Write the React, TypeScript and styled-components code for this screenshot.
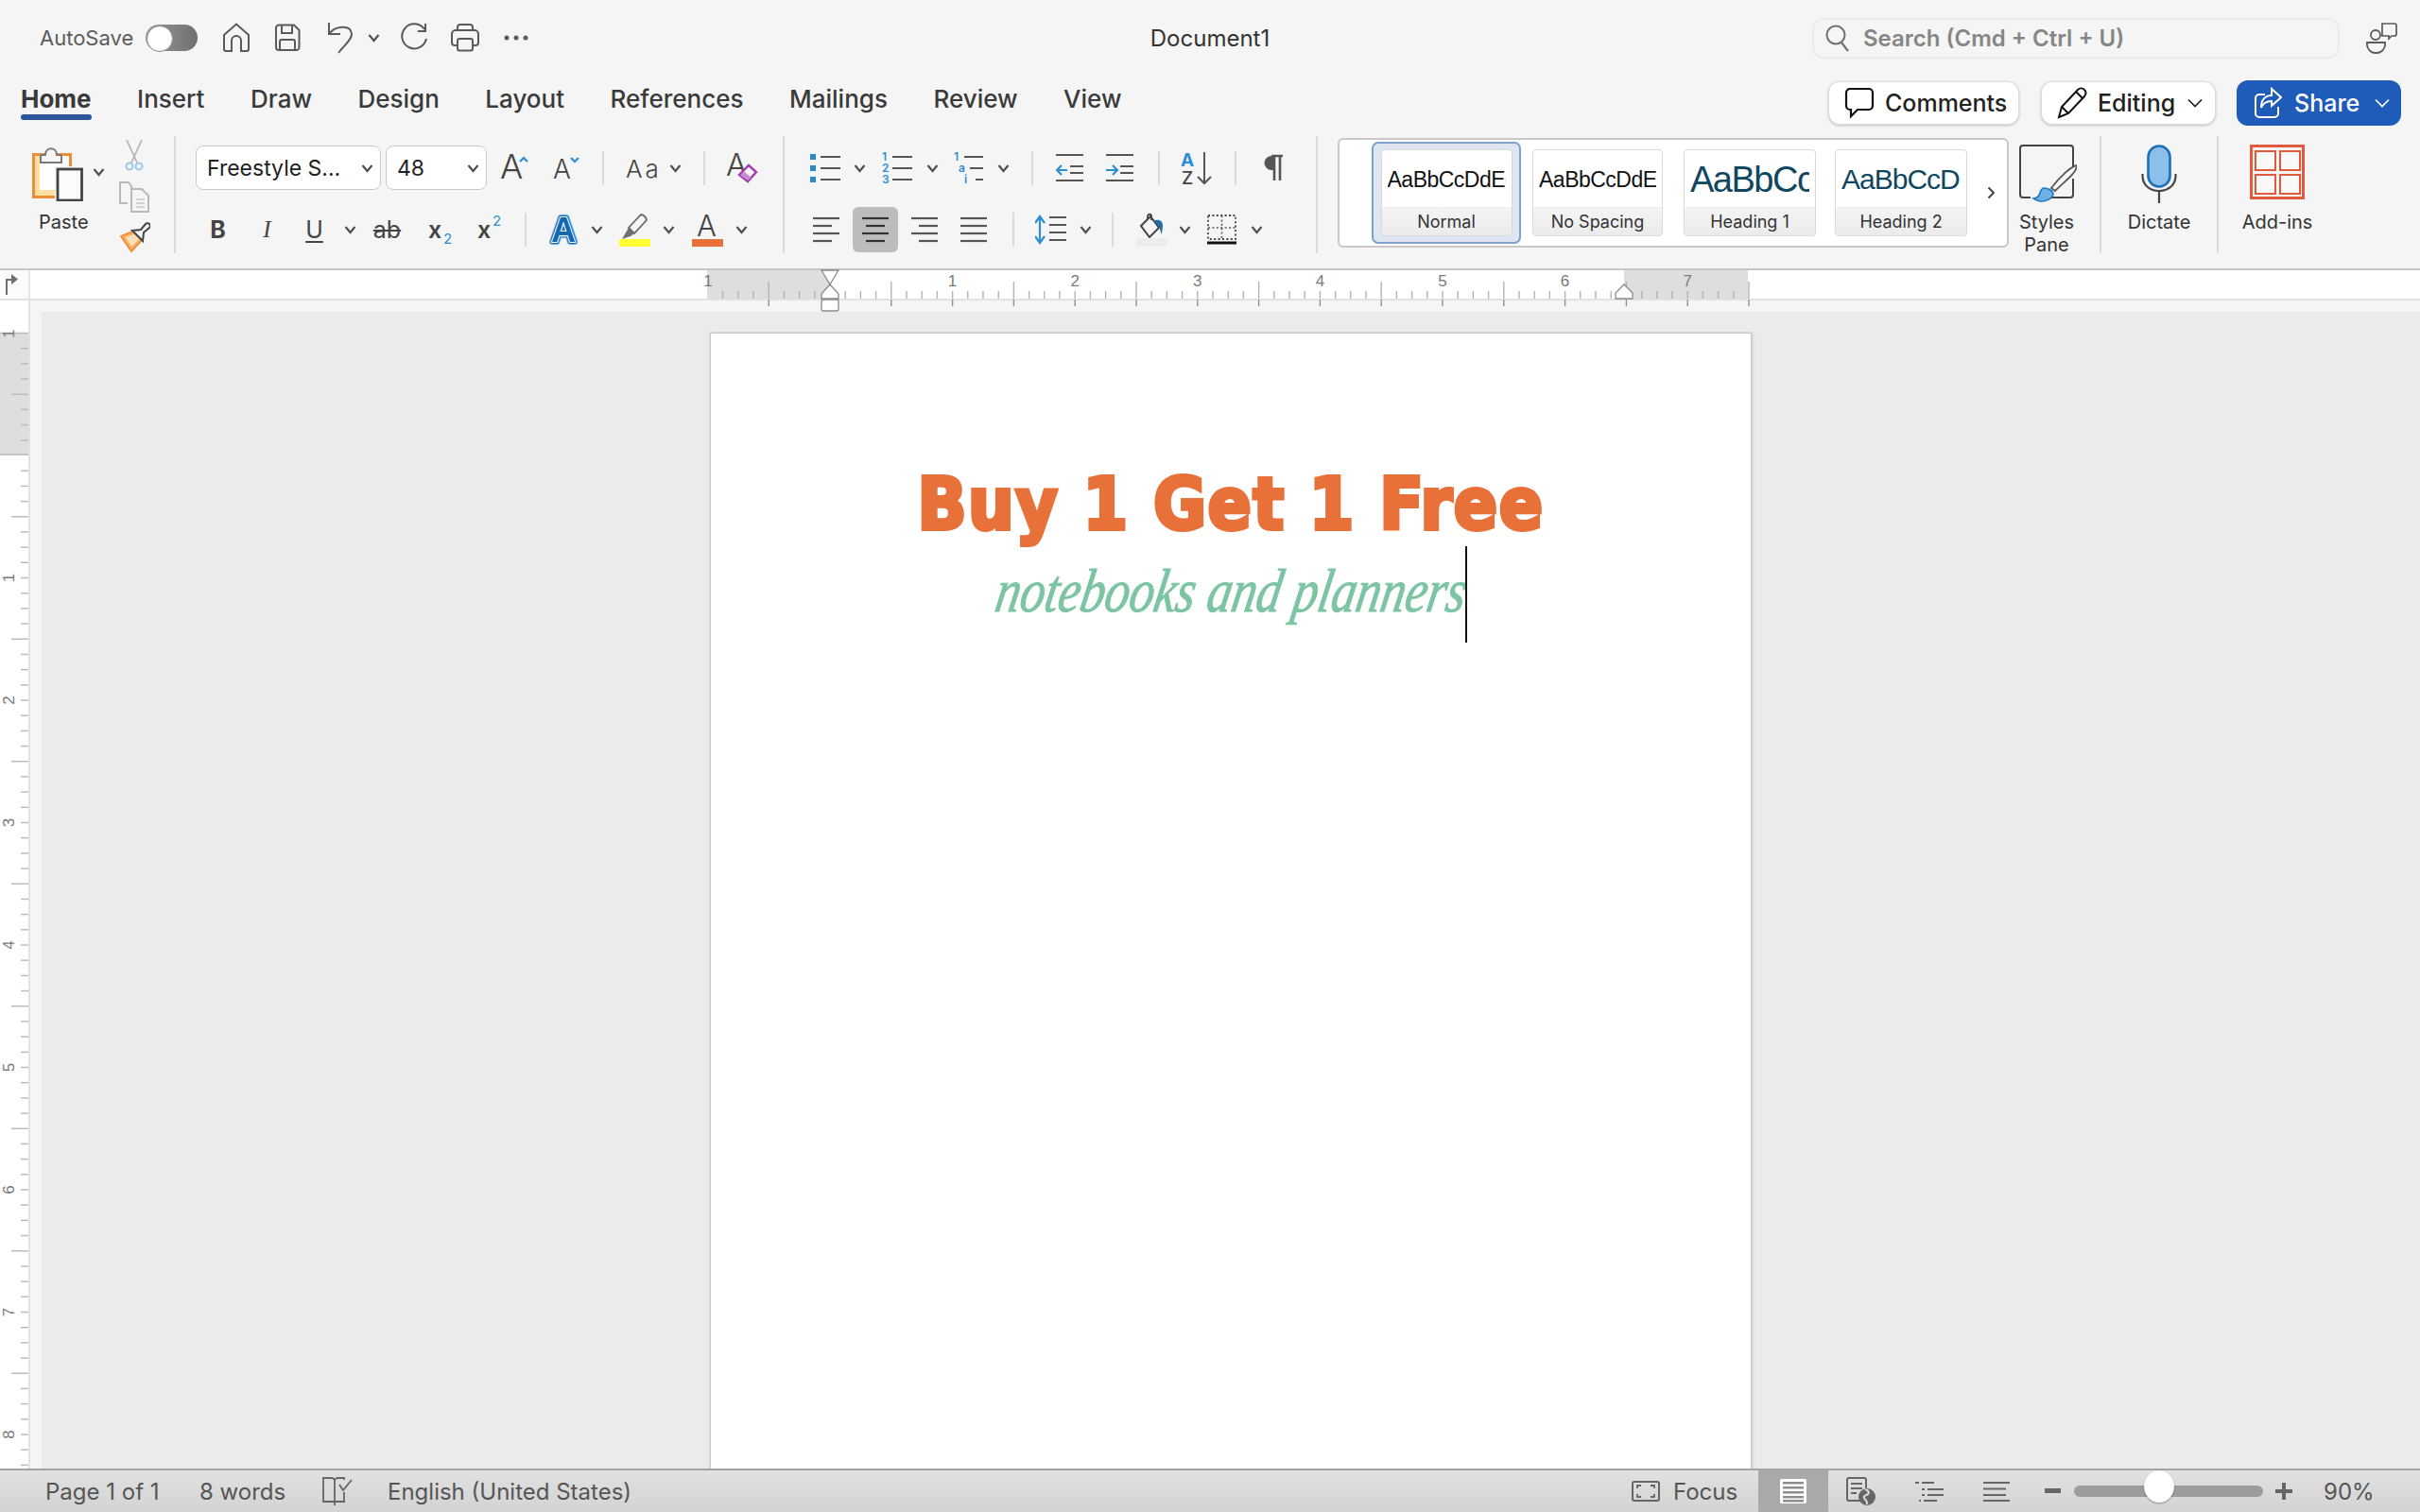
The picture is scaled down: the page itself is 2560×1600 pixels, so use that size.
import React, { FC, ReactNode } from 'react';
import styled, { createGlobalStyle } from 'styled-components';

const GlobalStyle = createGlobalStyle`
  html, body { margin: 0; padding: 0; background: #f5f5f5; }
  body { font-family: Inter, "Liberation Sans", sans-serif; overflow: hidden; }
  * { box-sizing: border-box; }
`;

const Window = styled.div`
  width: 2560px;
  height: 1600px;
  display: flex;
  flex-direction: column;
  overflow: hidden;
  background: #f5f5f5;
  color: #333;
`;

/* title bar */
const TopBar = styled.div`
  height: 80px;
  flex: none;
  display: grid;
  grid-template-columns: 1fr auto 1fr;
  align-items: center;
`;

const QuickAccess = styled.div`
  display: flex;
  align-items: center;
  padding-left: 42px;
`;

const AutoSave = styled.span`
  font-size: 22px;
  color: #5c5c5c;
  width: 112px;
`;

const Toggle = styled.span`
  position: relative;
  width: 55px;
  height: 28px;
  border-radius: 14px;
  background: linear-gradient(90deg, #9a9a9a, #6f6f6f);
  &::after {
    content: '';
    position: absolute;
    left: 1px;
    top: 1px;
    width: 26px;
    height: 26px;
    border-radius: 50%;
    background: #fff;
    border: 1px solid #8c8c8c;
  }
`;

const DocTitle = styled.div`
  font-size: 24px;
  color: #333;
`;

const TopRight = styled.div`
  display: flex;
  align-items: center;
  justify-content: flex-end;
  padding-right: 24px;
`;

const SearchBox = styled.div`
  width: 558px;
  height: 43px;
  display: flex;
  align-items: center;
  padding-left: 12px;
  gap: 14px;
  border: 2px solid #eaeaea;
  border-radius: 12px;
  color: #868686;
  font-size: 24px;
  font-weight: 600;
`;

/* tab row */
const TabRow = styled.div`
  height: 60px;
  flex: none;
  display: flex;
  align-items: flex-start;
  padding: 4px 20px 0 22px;
`;

const Tabs = styled.div`
  display: flex;
  gap: 48.5px;
`;

const Tab = styled.div<{ $active?: boolean }>`
  position: relative;
  height: 42px;
  line-height: 42px;
  font-size: 26px;
  color: #3a3a3a;
  font-weight: ${p => (p.$active ? 700 : 500)};
  &::after {
    content: '';
    display: ${p => (p.$active ? 'block' : 'none')};
    position: absolute;
    left: 0;
    right: 0;
    bottom: -1px;
    height: 6px;
    border-radius: 3px;
    background: #2b579a;
  }
`;

const ActionGroup = styled.div`
  margin-left: auto;
  display: flex;
  align-items: center;
  margin-top: 1px;
`;

const PillButton = styled.button<{ $w: number; $ml?: number; $primary?: boolean }>`
  width: ${p => p.$w}px;
  margin-left: ${p => p.$ml ?? 0}px;
  height: ${p => (p.$primary ? 48 : 46)}px;
  display: flex;
  align-items: center;
  padding: 0 0 0 ${p => (p.$primary ? 18 : 16)}px;
  gap: ${p => (p.$primary ? 13 : 11)}px;
  border-radius: 12px;
  border: ${p => (p.$primary ? 'none' : '1px solid #dcdcdc')};
  background: ${p => (p.$primary ? '#1f5cba' : '#fff')};
  color: ${p => (p.$primary ? '#fff' : '#222')};
  box-shadow: ${p => (p.$primary ? 'none' : '0 1px 3px rgba(0,0,0,.22)')};
  font: 500 25px Inter, "Liberation Sans", sans-serif;
`;

/* ribbon */
const Ribbon = styled.div`
  height: 146px;
  flex: none;
  display: flex;
  align-items: flex-start;
  padding-top: 4px;
  border-bottom: 2px solid #c6c6c6;
`;

const Group = styled.div<{ $w: number; $line?: boolean }>`
  width: ${p => p.$w}px;
  height: 124px;
  flex: none;
  border-right: ${p => (p.$line ? '2px solid #dadada' : 'none')};
`;

const ClipGroup = styled(Group)`
  display: flex;
  padding: 9px 0 0 34px;
`;

const PasteCol = styled.div`
  width: 54px;
  flex: none;
  display: flex;
  flex-direction: column;
`;

const BigLabel = styled.div`
  font-size: 20px;
  line-height: 24px;
  color: #333;
  text-align: center;
  white-space: nowrap;
`;

const PasteLabel = styled(BigLabel)`
  margin: 10px 0 0 7px;
`;

const ChevCell = styled.span`
  width: 14px;
  height: 58px;
  margin-left: 9px;
  flex: none;
  display: flex;
  align-items: center;
  justify-content: center;
`;

const SmallTools = styled.div`
  display: flex;
  flex-direction: column;
  margin: -6px 0 0 14px;
  gap: 10px;
`;

const Rows = styled(Group)`
  display: flex;
  flex-direction: column;
  gap: 18px;
  padding-top: 10px;
`;

const Row = styled.div<{ $pl?: number }>`
  height: 47px;
  display: flex;
  align-items: center;
  padding-left: ${p => p.$pl ?? 0}px;
`;

const Slot = styled.span<{ $w: number; $ml?: number }>`
  flex: none;
  width: ${p => p.$w}px;
  margin-left: ${p => p.$ml ?? 0}px;
  display: flex;
  align-items: center;
  justify-content: center;
`;

const ActiveSlot = styled(Slot)`
  height: 48px;
  background: #bcbcbc;
  border-radius: 6px;
`;

const Divider = styled.span<{ $ml: number }>`
  flex: none;
  width: 2px;
  height: 36px;
  margin-left: ${p => p.$ml}px;
  background: #dadada;
`;

const SelectBox = styled.div<{ $w: number; $ml?: number }>`
  width: ${p => p.$w}px;
  margin-left: ${p => p.$ml ?? 0}px;
  height: 47px;
  flex: none;
  display: flex;
  align-items: center;
  justify-content: space-between;
  padding: 0 7px 0 11px;
  background: #fff;
  border: 1.5px solid #c9c9c9;
  border-radius: 8px;
  font-size: 23px;
  color: #222;
`;

const GalleryGroup = styled(Group)`
  display: flex;
  align-items: flex-start;
  padding: 2px 0 0 21px;
`;

const Gallery = styled.div`
  width: 710px;
  height: 116px;
  flex: none;
  display: flex;
  align-items: center;
  padding-left: 34px;
  background: #fff;
  border: 2px solid #c8c8c8;
  border-radius: 6px;
`;

const SelectedStyle = styled.div`
  width: 158px;
  height: 108px;
  flex: none;
  display: flex;
  align-items: center;
  justify-content: center;
  background: #dfe6f1;
  border: 2.5px solid #7da0cf;
  border-radius: 7px;
`;

const StyleCard = styled.div<{ $w: number; $ml?: number }>`
  width: ${p => p.$w}px;
  margin-left: ${p => p.$ml ?? 0}px;
  height: 92px;
  flex: none;
  display: flex;
  flex-direction: column;
  border: 1.5px solid #d9d9d9;
  border-radius: 4px;
  overflow: hidden;
  background: linear-gradient(#fff 70%, #f7f7f7);
`;

const StylePreview = styled.div<{ $size: number; $track?: number; $heading?: boolean }>`
  height: 60px;
  line-height: 62px;
  margin: 0 6px;
  overflow: hidden;
  white-space: nowrap;
  font-family: "Liberation Sans", sans-serif;
  font-size: ${p => p.$size}px;
  letter-spacing: ${p => p.$track ?? 0}px;
  color: ${p => (p.$heading ? '#0f4761' : '#111')};
`;

const StyleName = styled.div`
  flex: 1;
  display: flex;
  align-items: center;
  justify-content: center;
  font-size: 18px;
  color: #333;
  background: linear-gradient(#f4f4f4, #ebebeb);
  border-top: 1px solid #eeeeee;
`;

const BigTool = styled.div<{ $ml?: number; $w: number }>`
  width: ${p => p.$w}px;
  margin-left: ${p => p.$ml ?? 0}px;
  flex: none;
  display: flex;
  flex-direction: column;
  align-items: center;
`;

const PaneTool = styled(BigTool)`
  margin-top: -2px;
`;

const BigIconBox = styled.div`
  height: 79px;
  padding-top: 9px;
  display: flex;
  align-items: flex-start;
`;

const ToolGroup = styled(Group)`
  display: flex;
  justify-content: center;
`;

/* rulers and canvas */
const RulerRow = styled.div`
  height: 32px;
  flex: none;
  display: flex;
  background: #fff;
  border-bottom: 2px solid #e2e2e2;
`;

const RulerCorner = styled.div`
  width: 32px;
  height: 30px;
  flex: none;
  display: flex;
  align-items: center;
  justify-content: center;
  padding-right: 6px;
  background: #fbfbfb;
  border-right: 2px solid #e6e6e6;
`;

const RulerSvg = styled.svg`
  display: block;
  flex: none;
  overflow: visible;
  position: relative;
  z-index: 2;
`;

const Work = styled.div`
  flex: 1;
  min-height: 0;
  display: flex;
`;

const VRulerCol = styled.div`
  width: 32px;
  flex: none;
  background: #fff;
  border-right: 2px solid #e2e2e2;
  overflow: hidden;
`;

const Canvas = styled.div`
  flex: 1;
  min-width: 0;
  padding: 12px 0 0 12px;
  background: #f5f5f5;
  overflow: hidden;
`;

const CanvasInner = styled.div`
  height: 100%;
  padding: 23px 0 0 708px;
  background: #ebebeb;
  overflow: hidden;
`;

const Page = styled.div`
  width: 1100px;
  height: 1300px;
  padding-top: 136px;
  background: #fff;
  box-shadow: 0 0 0 1.5px #c9c9c9, 3px 0 3px rgba(0, 0, 0, 0.06);
  text-align: center;
`;

const Headline = styled.div`
  height: 90px;
  font-family: "DejaVu Sans", "Liberation Sans", sans-serif;
  font-stretch: condensed;
  font-weight: 700;
  font-size: 76px;
  line-height: 90px;
  letter-spacing: 1.5px;
  color: #e8713a;
  -webkit-text-stroke: 4px #e8713a;
  white-space: nowrap;
`;

const Subline = styled.div`
  height: 90px;
  padding-top: 4px;
  font-family: "Liberation Serif", serif;
  font-style: italic;
  font-size: 52px;
  line-height: 90px;
  color: #7cc4a4;
  -webkit-text-stroke: 0.8px #7cc4a4;
  white-space: nowrap;
`;

const SubText = styled.span`
  position: relative;
  display: inline-block;
  margin-right: 3px;
`;

const SlantedText = styled.span`
  display: inline-block;
  transform: skewX(-10deg) scaleY(1.25);
  transform-origin: 50% 62%;
`;

const Caret = styled.span`
  position: absolute;
  right: -3px;
  top: -5px;
  width: 2px;
  height: 102px;
  background: #111;
`;

/* status bar */
const StatusBar = styled.div`
  height: 46px;
  flex: none;
  display: flex;
  align-items: center;
  padding-left: 48px;
  background: linear-gradient(#e1e1e1, #d3d3d3);
  border-top: 2px solid #a3a3a3;
  color: #555;
  font-size: 24px;
`;

const StatusText = styled.span<{ $w: number; $ml?: number }>`
  width: ${p => p.$w}px;
  margin-left: ${p => p.$ml ?? 0}px;
  flex: none;
  white-space: nowrap;
`;

const StatusRight = styled.div`
  margin-left: auto;
  height: 100%;
  display: flex;
  align-items: center;
`;

const ViewActive = styled.span`
  width: 74px;
  height: 100%;
  margin-left: 22px;
  display: flex;
  align-items: center;
  justify-content: center;
  background: #a9a9a9;
`;

const ZoomTrack = styled.span`
  position: relative;
  width: 200px;
  height: 12px;
  margin-left: 14px;
  flex: none;
  border-radius: 6px;
  background: #9c9c9c;
`;

const ZoomThumb = styled.span<{ $pos: number }>`
  position: absolute;
  left: ${p => p.$pos}px;
  top: -16px;
  width: 32px;
  height: 34px;
  margin-left: -16px;
  border-radius: 50%;
  background: #fff;
  box-shadow: 0 1px 2px rgba(0, 0, 0, 0.35);
`;

/* icons */
type SvgProps = { w: number; h: number; children: ReactNode };

const Ico: FC<SvgProps> = ({ w, h, children }) => (
  <svg width={w} height={h} viewBox={`0 0 ${w} ${h}`} fill="none" style={{ display: 'block', flex: 'none' }}>
    {children}
  </svg>
);

const LINE = '#5a5a5a';
const BLUE = '#2c8fd0';
const UI = 'Inter, "Liberation Sans", sans-serif';

const Chev: FC<{ color?: string }> = ({ color = '#505050' }) => (
  <Ico w={13} h={10}>
    <path d="M1.5 2 6.5 8 11.5 2" stroke={color} strokeWidth="2.2" />
  </Ico>
);
const ThinChev: FC<{ color: string }> = ({ color }) => (
  <Ico w={16} h={10}>
    <path d="M1 1.500 8 8.500 15 1.500" stroke={color} strokeWidth="1.700" />
  </Ico>
);

const HomeIcon = () => (
  <Ico w={30} h={32}>
    <path d="M2 13 15 1.5 28 13V28a2 2 0 0 1-2 2h-6V19a5 5 0 0 0-10 0v11H4a2 2 0 0 1-2-2Z" stroke={LINE} strokeWidth="2" />
  </Ico>
);
const SaveIcon = () => (
  <Ico w={28} h={30}>
    <path d="M5 1.5h16l5.500 5.500V25a3 3 0 0 1-3 3H5a3 3 0 0 1-3-3V4.500a3 3 0 0 1 3-3Z" stroke={LINE} strokeWidth="2" />
    <path d="M8 2v8h11V2M6 28V19a2 2 0 0 1 2-2h12a2 2 0 0 1 2 2v9" stroke={LINE} strokeWidth="2" />
  </Ico>
);
const UndoIcon = () => (
  <Ico w={28} h={34}>
    <path d="M2 1v12h12M2.500 12.500C8 5 25 2 26 13c.5 6-9 13-14 20" stroke={LINE} strokeWidth="2" />
  </Ico>
);
const RedoIcon = () => (
  <Ico w={30} h={32}>
    <path d="M26 7A13 13 0 1 0 28 17M27 1v8h-8" stroke={LINE} strokeWidth="2" />
  </Ico>
);
const PrintIcon = () => (
  <Ico w={32} h={30}>
    <path d="M8 7V4a3 3 0 0 1 3-3h10a3 3 0 0 1 3 3v3M8 23H5a3 3 0 0 1-3-3V11a4 4 0 0 1 4-4h20a4 4 0 0 1 4 4v9a3 3 0 0 1-3 3h-3" stroke={LINE} strokeWidth="2" />
    <rect x="8" y="16" width="16" height="12.500" rx="2" stroke={LINE} strokeWidth="2" />
  </Ico>
);
const DotsIcon = () => (
  <Ico w={26} h={6}>
    <circle cx="3" cy="3" r="2.500" fill={LINE} />
    <circle cx="13" cy="3" r="2.500" fill={LINE} />
    <circle cx="23" cy="3" r="2.500" fill={LINE} />
  </Ico>
);
const SearchIcon = () => (
  <Ico w={26} h={30}>
    <circle cx="11" cy="12" r="9.500" stroke="#707070" strokeWidth="2" />
    <path d="M17 20l7 9" stroke="#707070" strokeWidth="2.200" />
  </Ico>
);
const PeopleChat = () => (
  <Ico w={34} h={34}>
    <path d="M18 2h13a2 2 0 0 1 2 2v9a2 2 0 0 1-2 2h-3l-3 3v-3h-7z" fill="#f5f5f5" stroke={LINE} strokeWidth="1.700" />
    <circle cx="11" cy="14" r="5" stroke={LINE} strokeWidth="1.800" />
    <path d="M2 22h19v3a9 9 0 0 1-9 8h-1a9 9 0 0 1-9-8z" stroke={LINE} strokeWidth="1.800" />
  </Ico>
);
const CommentIcon = () => (
  <Ico w={32} h={34}>
    <path d="M6 2h20a4 4 0 0 1 4 4v14a4 4 0 0 1-4 4H14l-7 7v-7H6a4 4 0 0 1-4-4V6a4 4 0 0 1 4-4Z" stroke="#111" strokeWidth="2.200" />
  </Ico>
);
const PencilIcon = () => (
  <Ico w={32} h={34}>
    <path d="M2 32 5 21 22 3c2-2 5-2 7 0s1.500 5 0 7L12 28Z M5 21l7 7M20 5l7 7" stroke="#111" strokeWidth="2" />
  </Ico>
);
const ShareIcon = () => (
  <Ico w={30} h={34}>
    <path d="M12 8H6a4 4 0 0 0-4 4v16a4 4 0 0 0 4 4h16a4 4 0 0 0 4-4v-7" stroke="#fff" strokeWidth="2" />
    <path d="M19 2l10 9-10 9v-5c-6 0-9 2-11 7 0-8 4-13 11-13z" stroke="#fff" strokeWidth="2" />
  </Ico>
);
const ClipboardIcon = () => (
  <Ico w={54} h={60}>
    <rect x="1.500" y="10.500" width="39" height="45" fill="#fbe0a0" stroke="#ea8e3c" strokeWidth="3" />
    <rect x="8" y="12" width="31" height="36" fill="#fdfdfd" />
    <path d="M9 19V13c0-1 1-2 2-2h3c0-9 12-9 12 0h3c1 0 2 1 2 2v6z" fill="#f5f5f5" stroke="#7a7a7a" strokeWidth="2" />
    <rect x="24" y="23" width="30" height="37" fill="#f5f5f5" />
    <rect x="27" y="26" width="25.500" height="33" fill="#fbfbfb" stroke="#444" strokeWidth="2.800" />
  </Ico>
);
const ScissorsIcon = () => (
  <Ico w={22} h={34}>
    <path d="M3 1 14 25M19 1 8 25" stroke="#b5b5b5" strokeWidth="1.800" />
    <circle cx="6" cy="29" r="3.500" stroke="#9cc7e6" strokeWidth="2" />
    <circle cx="16" cy="29" r="3.500" stroke="#9cc7e6" strokeWidth="2" />
  </Ico>
);
const CopyIcon = () => (
  <Ico w={34} h={34}>
    <path d="M10 24H2V2h9l3 4v3" stroke="#b9b9b9" strokeWidth="2" />
    <path d="M14 9h11l7 7v17H14z" stroke="#b9b9b9" strokeWidth="2" />
    <path d="M19 20h9M19 24h9M19 28h9" stroke="#c6c6c6" strokeWidth="1.600" />
  </Ico>
);
const BrushIcon = () => (
  <Ico w={34} h={32}>
    <path d="M3 15 17 9l9 9-12 13z" fill="#f7b26a" stroke="#ee8a2d" strokeWidth="1.800" />
    <path d="M8 16l9-3 5 5-8 8z" fill="#fbe0b8" />
    <path d="M15 9l9-1 5-6c1-1 3-1 4 0s1 3 0 4l-6 5-1 9z" fill="#f5f5f5" stroke="#444" strokeWidth="2" />
  </Ico>
);
const GrowA: FC<{ up?: boolean }> = ({ up }) => (
  <Ico w={up ? 32 : 28} h={32}>
    <text x="0" y="27" fontFamily={UI} fontWeight="300" fontSize={up ? 36 : 28} fill="#444">A</text>
    {up ? <path d="M21 9l4-4 4 4" stroke={BLUE} strokeWidth="2.200" /> : <path d="M19 5l4 4 4-4" stroke={BLUE} strokeWidth="2.200" />}
  </Ico>
);
const CaseIcon = () => (
  <Ico w={34} h={30}>
    <text x="0" y="25" fontFamily={UI} fontWeight="300" fontSize="26" fill="#444" letterSpacing="3">Aa</text>
  </Ico>
);
const ClearIcon = () => (
  <Ico w={34} h={36}>
    <text x="0" y="26" fontFamily={UI} fontWeight="300" fontSize="33" fill="#444">A</text>
    <path d="M14 25 24 15l8 7-9 10z" fill="#f5f5f5" stroke="#a03ab0" strokeWidth="2.400" />
    <path d="M15 25.500 19 21.500 27 28 23 31z" fill="#c88bd6" />
  </Ico>
);
const TextGlyph = styled.span<{ $bold?: boolean; $italic?: boolean; $serif?: boolean; $underline?: boolean; $strike?: boolean }>`
  font-family: ${p => (p.$serif ? '"Liberation Serif", serif' : 'Inter, "Liberation Sans", sans-serif')};
  font-weight: ${p => (p.$bold ? 700 : 400)};
  font-style: ${p => (p.$italic ? 'italic' : 'normal')};
  text-decoration: ${p => (p.$underline ? 'underline' : p.$strike ? 'line-through' : 'none')};
  text-underline-offset: 3px;
  font-size: 25px;
  line-height: 30px;
  color: #444;
`;
const ScriptIcon: FC<{ up?: boolean }> = ({ up }) => (
  <Ico w={26} h={32}>
    <text x="0" y="25" fontFamily={UI} fontWeight="600" fontSize="25" fill="#444">x</text>
    <text x="16" y={up ? 12 : 31} fontFamily={UI} fontSize="15" fill={BLUE}>2</text>
  </Ico>
);
const EffectA = () => {
  const layers = [
    { stroke: '#9ccff2', sw: 6.500 },
    { stroke: '#1268b0', sw: 4.500 },
    { stroke: '#ffffff', sw: 2.200 },
    { stroke: '#1268b0', sw: 0 },
  ];
  return (
    <Ico w={32} h={34}>
      {layers.map(l => (
        <text
          key={l.stroke + l.sw}
          x="16"
          y="30"
          textAnchor="middle"
          fontFamily='"Liberation Sans", sans-serif'
          fontWeight="700"
          fontSize="36"
          fill="#1268b0"
          stroke={l.stroke}
          strokeWidth={l.sw}
          strokeLinejoin="round"
        >
          A
        </text>
      ))}
    </Ico>
  );
};
const HighlightIcon = () => (
  <Ico w={33} h={36}>
    <path d="M10 16 22 3c1-1 3-1 5 1s2 4 1 5L16 22z" fill="#f5f5f5" stroke="#666" strokeWidth="1.800" />
    <path d="M10 16l6 6-4 3-9 3z" fill="#707070" />
    <rect y="28" width="33" height="8" fill="#ffff30" />
  </Ico>
);
const ColorA = () => (
  <Ico w={33} h={36}>
    <text x="5" y="25" fontFamily={UI} fontWeight="300" fontSize="31" fill="#444">A</text>
    <rect y="28" width="33" height="8" fill="#e8713a" />
  </Ico>
);
const ListIcon: FC<{ kind: 'bullet' | 'number' | 'multi' }> = ({ kind }) => (
  <Ico w={32} h={36}>
    {kind === 'bullet' && [3, 15, 27].map(y => <rect key={y} x="0" y={y} width="6" height="6" fill="#2b88c8" />)}
    {kind === 'number' &&
      ['1', '2', '3'].map((n, i) => (
        <text key={n} x="0" y={10 + i * 12} fontFamily={UI} fontWeight="600" fontSize="12" fill={BLUE}>{n}</text>
      ))}
    {kind === 'multi' &&
      ['1', 'a', 'i'].map((n, i) => (
        <text key={n} x={i === 0 ? 0 : i === 1 ? 5 : 11} y={10 + i * 12} fontFamily={UI} fontWeight="600" fontSize="12" fill={BLUE}>{n}</text>
      ))}
    <path d={kind === 'multi' ? 'M11 6h20M17 18h14M23 30h8' : 'M11 6h21M11 18h21M11 30h21'} stroke="#555" strokeWidth="2" />
  </Ico>
);
const IndentIcon: FC<{ inc?: boolean }> = ({ inc }) => (
  <Ico w={29} h={34}>
    <path d="M0 4h29M15 16h14M15 23h14M0 31h29" stroke="#555" strokeWidth="2" transform="translate(0 -1)" />
    {inc ? (
      <path d="M0 19h11M7 14l5 5-5 5" stroke={BLUE} strokeWidth="2.200" />
    ) : (
      <path d="M12 19H1M6 14l-5 5 5 5" stroke={BLUE} strokeWidth="2.200" />
    )}
  </Ico>
);
const SortIcon = () => (
  <Ico w={33} h={38}>
    <text x="0" y="17" fontFamily={UI} fontSize="19" fontWeight="700" fill={BLUE}>A</text>
    <text x="1" y="36" fontFamily={UI} fontSize="19" fontWeight="500" fill="#444">Z</text>
    <path d="M25 2v33M18 28l7 7 7-7" stroke="#555" strokeWidth="2" />
  </Ico>
);
const Pilcrow = () => (
  <Ico w={22} h={30}>
    <path d="M9 2h12M12 2v26M18 2v26" stroke="#555" strokeWidth="2.600" />
    <path d="M12 2h-3a7.500 7.500 0 0 0 0 15h3z" fill="#555" />
  </Ico>
);
const AlignIcon: FC<{ kind: 'left' | 'center' | 'right' | 'full'; dark?: boolean }> = ({ kind, dark }) => {
  const rows = {
    left: ['M0 3h28', 'M0 11h20', 'M0 19h28', 'M0 27h20'],
    center: ['M0 3h28', 'M4 11h20', 'M0 19h28', 'M4 27h20'],
    right: ['M0 3h28', 'M8 11h20', 'M0 19h28', 'M8 27h20'],
    full: ['M0 3h28', 'M0 11h28', 'M0 19h28', 'M0 27h28'],
  }[kind];
  return (
    <Ico w={28} h={30}>
      {rows.map(d => (
        <path key={d} d={d} stroke={dark ? '#333' : '#555'} strokeWidth="2.200" />
      ))}
    </Ico>
  );
};
const SpacingIcon = () => (
  <Ico w={33} h={34}>
    <path d="M15 3h18M15 11h18M15 19h18M15 27h18" stroke="#555" strokeWidth="2.200" transform="translate(0 1)" />
    <path d="M5 4v26M0 10l5-7 5 7M0 24l5 7 5-7" stroke={BLUE} strokeWidth="2.200" />
  </Ico>
);
const FillIcon = () => (
  <Ico w={33} h={36}>
    <path d="M5 14 15 4 24 16 14 26z" fill="#f5f5f5" stroke="#444" strokeWidth="2" />
    <path d="M12 7V4c0-3 4-3 4 0v4" stroke="#444" strokeWidth="1.800" />
    <path d="M20 8c5-1 8 1 8 6 0 3-1 5-1 9-2-4-2-10-7-12z" fill="#1d6fb0" />
    <rect y="27" width="33" height="9" fill="#ededed" />
  </Ico>
);
const BorderIcon = () => (
  <Ico w={31} h={32}>
    <rect x="1" y="1" width="29" height="25" stroke="#444" strokeWidth="1.800" strokeDasharray="2 2.400" />
    <path d="M15.500 1v25M1 14h29" stroke="#555" strokeWidth="1.600" strokeDasharray="2 2.400" />
    <path d="M0 30h31" stroke="#111" strokeWidth="3" />
  </Ico>
);
const StylesPaneIcon = () => (
  <Ico w={64} h={62}>
    <path d="M15 56H7a3 3 0 0 1-3-3V4a3 3 0 0 1 3-3h50a3 3 0 0 1 3 3v20M60 36v17a3 3 0 0 1-3 3H36" stroke="#444" strokeWidth="2" />
    <path d="M64 22c-6 1-18 12-27 24l4 3C50 40 64 30 64 22z" fill="#f8f8f8" stroke="#555" strokeWidth="1.800" />
    <path d="M29 46c5 0 10 3 10 7-2 5-8 7-12 7-4 0-8-2-9-3 4 0 6-2 7-6 1-3 2-5 4-5z" fill="#6fb0e6" stroke="#1f78c2" strokeWidth="1.600" />
  </Ico>
);
const MicIcon = () => (
  <Ico w={38} h={62}>
    <rect x="7.500" y="1.500" width="23" height="43" rx="11.500" fill="#8cc0ea" stroke="#1a70b8" strokeWidth="2.600" />
    <path d="M1.500 31v2c0 10 8 16 17.500 16s17.500-6 17.500-16v-2M19 49v13" stroke="#444" strokeWidth="2.200" />
  </Ico>
);
const AddinsIcon = () => (
  <Ico w={58} h={58}>
    <rect x="1.500" y="1.500" width="55" height="55" stroke="#e25a3c" strokeWidth="3" />
    {[
      [6, 7],
      [32, 7],
      [6, 32],
      [32, 32],
    ].map(([x, y]) => (
      <rect key={`${x}-${y}`} x={x} y={y} width="21" height="20" fill="#f8f8f8" stroke="#e25a3c" strokeWidth="2" />
    ))}
  </Ico>
);
const ProofIcon = () => (
  <Ico w={34} h={32}>
    <path d="M2 2h8c2 0 4 1 4 3v22H2zM14 5c0-2 2-3 4-3h6v2M24 17v10H14M14 27v4" stroke="#666" strokeWidth="1.800" />
    <path d="M19 9l4 6 9-11" stroke="#666" strokeWidth="1.800" />
  </Ico>
);
const FocusIcon = () => (
  <Ico w={30} h={22}>
    <rect x="1" y="1" width="28" height="20" rx="2" stroke="#666" strokeWidth="2" />
    <path d="M6 8V5h4M20 5h4v3M24 14v3h-4M10 17H6v-3" stroke="#666" strokeWidth="1.800" />
  </Ico>
);
const PrintView = () => (
  <Ico w={28} h={26}>
    <rect width="28" height="26" rx="2" fill="#fff" />
    {[4, 9, 14, 19, 23].map(y => (
      <rect key={y} x="3" y={y - 1} width="22" height="2.500" fill="#8d8d8d" />
    ))}
  </Ico>
);
const WebView = () => (
  <Ico w={32} h={30}>
    <rect x="1" y="1" width="20" height="24" rx="2" stroke="#666" strokeWidth="2" />
    <path d="M5 7h12M5 12h12M5 17h6" stroke="#666" strokeWidth="2" />
    <circle cx="22" cy="21" r="9" fill="#666" />
    <path d="M20 13c3 1 5 3 3 5s-5 1-4 4 4 3 3 7" stroke="#dcdcdc" strokeWidth="2" />
  </Ico>
);
const OutlineView = () => (
  <Ico w={30} h={22}>
    <path d="M0 2h4M7 2h13M7 9h3M13 9h17M7 15h3M13 15h17M4 21h2M9 21h14" stroke="#666" strokeWidth="2" />
  </Ico>
);
const DraftView = () => (
  <Ico w={28} h={22}>
    <path d="M0 2h28M0 8.500h24M0 15h24M0 21h28" stroke="#666" strokeWidth="2.200" />
  </Ico>
);
const CornerIcon = () => (
  <Ico w={14} h={22}>
    <path d="M2 22V6h6" stroke="#6f6f6f" strokeWidth="2" />
    <path d="M7 0l7 5.500-7 5.500z" fill="#6f6f6f" />
  </Ico>
);

const inchX = 129.6;
const originX = 878;

const HRuler = () => {
  const ticks = Array.from({ length: 69 }, (_, i) => i - 8);
  return (
    <RulerSvg width={2528} height={30} viewBox="32 0 2528 30">
      <rect x={748} y={0} width={130} height={30} fill="#dedede" />
      <rect x={1718} y={0} width={131} height={30} fill="#dedede" />
      {ticks.map(i => {
        const x = originX + (i * inchX) / 8;
        const half = i % 8 === 4 || i % 8 === -4;
        const inch = i % 8 === 0;
        if (i === -8) return null;
        return (
          <g key={i} stroke="#b3b3b3" strokeWidth="1.400">
            <path d={`M${x} ${half ? 12 : 22}V30`} />
            {(half || inch) && <path d={`M${x} 31V38`} stroke="#8f8f8f" />}
          </g>
        );
      })}
      {[-1, 1, 2, 3, 4, 5, 6, 7].map(n => (
        <text
          key={n}
          x={n === -1 ? 749 : originX + n * inchX}
          y={17}
          textAnchor="middle"
          fontFamily='"Liberation Sans", sans-serif'
          fontSize="17"
          fill="#7a7a7a"
        >
          {Math.abs(n)}
        </text>
      ))}
      <g fill="#fff" stroke="#8a8a8a" strokeWidth="1.300">
        <path d={`M${originX - 9} 0h18l-9 15z`} />
        <path d={`M${originX} 15l9 10v5h-18v-5z`} />
        <rect x={originX - 9} y={31} width={18} height={12} rx="2" />
        <path d={`M1718 15l9 9v6h-18v-6z`} />
      </g>
    </RulerSvg>
  );
};

const VRuler = () => {
  const origin = 164;
  const inch = 129.5;
  const step = inch / 8;
  const ticks = Array.from({ length: 78 }, (_, i) => i - 8);
  return (
    <RulerSvg width={30} height={1236} viewBox="0 0 30 1236">
      <rect x={0} y={34} width={30} height={130} fill="#dedede" />
      <path d="M0 34.500h30M0 163h30" stroke="#bdbdbd" strokeWidth="1.600" />
      {ticks.map(i => {
        if (i === 0 || i === -8) return null;
        const long = i % 8 === 4 || i % 8 === -4;
        const y = origin + i * step;
        return <path key={i} d={`M${long ? 12 : 22} ${y}H30`} stroke="#bcbcbc" strokeWidth="1.500" />;
      })}
      {[-1, 1, 2, 3, 4, 5, 6, 7, 8].map(n => {
        const y = n < 0 ? 35 : origin + n * inch;
        return (
          <text
            key={n}
            transform={`translate(15 ${y}) rotate(-90)`}
            textAnchor="middle"
            fontFamily='"Liberation Sans", sans-serif'
            fontSize="17"
            fill="#7a7a7a"
          >
            {Math.abs(n)}
          </text>
        );
      })}
    </RulerSvg>
  );
};

const Tool: FC<{ w: number; ml?: number; children: ReactNode }> = ({ w, ml, children }) => (
  <Slot $w={w} $ml={ml}>
    {children}
  </Slot>
);

const ChevSlot: FC<{ ml: number }> = ({ ml }) => (
  <Slot $w={13} $ml={ml}>
    <Chev />
  </Slot>
);

const App: FC = () => (
  <Window>
    <GlobalStyle />
    <TopBar>
      <QuickAccess>
        <AutoSave>AutoSave</AutoSave>
        <Toggle />
        <Tool w={30} ml={26}><HomeIcon /></Tool>
        <Tool w={28} ml={25}><SaveIcon /></Tool>
        <Tool w={28} ml={28}><UndoIcon /></Tool>
        <ChevSlot ml={15} />
        <Tool w={30} ml={21}><RedoIcon /></Tool>
        <Tool w={32} ml={23}><PrintIcon /></Tool>
        <Tool w={26} ml={25}><DotsIcon /></Tool>
      </QuickAccess>
      <DocTitle>Document1</DocTitle>
      <TopRight>
        <SearchBox>
          <SearchIcon />
          <span>Search (Cmd + Ctrl + U)</span>
        </SearchBox>
        <Tool w={34} ml={27}><PeopleChat /></Tool>
      </TopRight>
    </TopBar>

    <TabRow>
      <Tabs>
        <Tab $active>Home</Tab>
        <Tab>Insert</Tab>
        <Tab>Draw</Tab>
        <Tab>Design</Tab>
        <Tab>Layout</Tab>
        <Tab>References</Tab>
        <Tab>Mailings</Tab>
        <Tab>Review</Tab>
        <Tab>View</Tab>
      </Tabs>
      <ActionGroup>
        <PillButton $w={202}>
          <CommentIcon />
          Comments
        </PillButton>
        <PillButton $w={185} $ml={23}>
          <PencilIcon />
          Editing
          <Slot $w={16} $ml={2}><ThinChev color="#222" /></Slot>
        </PillButton>
        <PillButton $w={174} $ml={22} $primary>
          <ShareIcon />
          Share
          <Slot $w={16} $ml={3}><ThinChev color="#fff" /></Slot>
        </PillButton>
      </ActionGroup>
    </TabRow>

    <Ribbon>
      <ClipGroup $w={186} $line>
        <PasteCol>
          <ClipboardIcon />
          <PasteLabel>Paste</PasteLabel>
        </PasteCol>
        <ChevCell><Chev /></ChevCell>
        <SmallTools>
          <Tool w={34}><ScissorsIcon /></Tool>
          <Tool w={34}><CopyIcon /></Tool>
          <Tool w={34}><BrushIcon /></Tool>
        </SmallTools>
      </ClipGroup>

      <Rows $w={644} $line>
        <Row $pl={21}>
          <SelectBox $w={196}>
            Freestyle S...
            <Chev />
          </SelectBox>
          <SelectBox $w={107} $ml={5}>
            48
            <Chev />
          </SelectBox>
          <Tool w={32} ml={14}><GrowA up /></Tool>
          <Tool w={28} ml={24}><GrowA /></Tool>
          <Divider $ml={24} />
          <Tool w={34} ml={23}><CaseIcon /></Tool>
          <ChevSlot ml={12} />
          <Divider $ml={23} />
          <Tool w={34} ml={22}><ClearIcon /></Tool>
        </Row>
        <Row $pl={21}>
          <Tool w={15} ml={16}><TextGlyph $bold>B</TextGlyph></Tool>
          <Tool w={15} ml={37}><TextGlyph $italic $serif>I</TextGlyph></Tool>
          <Tool w={19} ml={33}><TextGlyph $underline>U</TextGlyph></Tool>
          <ChevSlot ml={22} />
          <Tool w={33} ml={16}><TextGlyph $strike>ab</TextGlyph></Tool>
          <Tool w={26} ml={27}><ScriptIcon /></Tool>
          <Tool w={26} ml={26}><ScriptIcon up /></Tool>
          <Divider $ml={24} />
          <Tool w={32} ml={23}><EffectA /></Tool>
          <ChevSlot ml={13} />
          <Tool w={33} ml={17}><HighlightIcon /></Tool>
          <ChevSlot ml={13} />
          <Tool w={33} ml={18}><ColorA /></Tool>
          <ChevSlot ml={13} />
        </Row>
      </Rows>

      <Rows $w={564} $line>
        <Row>
          <Tool w={32} ml={27}><ListIcon kind="bullet" /></Tool>
          <ChevSlot ml={14} />
          <Tool w={32} ml={17}><ListIcon kind="number" /></Tool>
          <ChevSlot ml={15} />
          <Tool w={32} ml={16}><ListIcon kind="multi" /></Tool>
          <ChevSlot ml={14} />
          <Divider $ml={23} />
          <Tool w={29} ml={24}><IndentIcon /></Tool>
          <Tool w={29} ml={24}><IndentIcon inc /></Tool>
          <Divider $ml={26} />
          <Tool w={33} ml={22}><SortIcon /></Tool>
          <Divider $ml={24} />
          <Tool w={22} ml={28}><Pilcrow /></Tool>
        </Row>
        <Row>
          <Tool w={28} ml={30}><AlignIcon kind="left" /></Tool>
          <ActiveSlot $w={48} $ml={14}><AlignIcon kind="center" dark /></ActiveSlot>
          <Tool w={28} ml={14}><AlignIcon kind="right" /></Tool>
          <Tool w={28} ml={24}><AlignIcon kind="full" /></Tool>
          <Divider $ml={27} />
          <Tool w={33} ml={22}><SpacingIcon /></Tool>
          <ChevSlot ml={14} />
          <Divider $ml={21} />
          <Tool w={33} ml={24}><FillIcon /></Tool>
          <ChevSlot ml={12} />
          <Tool w={31} ml={17}><BorderIcon /></Tool>
          <ChevSlot ml={15} />
        </Row>
      </Rows>

      <GalleryGroup $w={829} $line>
        <Gallery>
          <SelectedStyle>
            <StyleCard $w={139}>
              <StylePreview $size={23} $track={-0.5}>AaBbCcDdEe</StylePreview>
              <StyleName>Normal</StyleName>
            </StyleCard>
          </SelectedStyle>
          <StyleCard $w={138} $ml={12}>
            <StylePreview $size={23} $track={-0.5}>AaBbCcDdEe</StylePreview>
            <StyleName>No Spacing</StyleName>
          </StyleCard>
          <StyleCard $w={140} $ml={22}>
            <StylePreview $size={38} $track={-1.5} $heading>AaBbCcDd</StylePreview>
            <StyleName>Heading 1</StyleName>
          </StyleCard>
          <StyleCard $w={140} $ml={20}>
            <StylePreview $size={30} $track={-1} $heading>AaBbCcDdE</StylePreview>
            <StyleName>Heading 2</StyleName>
          </StyleCard>
          <Slot $w={12} $ml={19}>
            <Ico w={9} h={14}>
              <path d="M1.500 1.500 7 7l-5.500 5.500" stroke="#444" strokeWidth="2" />
            </Ico>
          </Slot>
        </Gallery>
        <PaneTool $w={64} $ml={8}>
          <BigIconBox>
            <StylesPaneIcon />
          </BigIconBox>
          <BigLabel>Styles<br />Pane</BigLabel>
        </PaneTool>
      </GalleryGroup>

      <ToolGroup $w={124} $line>
        <BigTool $w={90}>
          <BigIconBox>
            <MicIcon />
          </BigIconBox>
          <BigLabel>Dictate</BigLabel>
        </BigTool>
      </ToolGroup>

      <ToolGroup $w={124}>
        <BigTool $w={90}>
          <BigIconBox>
            <AddinsIcon />
          </BigIconBox>
          <BigLabel>Add-ins</BigLabel>
        </BigTool>
      </ToolGroup>
    </Ribbon>

    <RulerRow>
      <RulerCorner>
        <CornerIcon />
      </RulerCorner>
      <HRuler />
    </RulerRow>

    <Work>
      <VRulerCol>
        <VRuler />
      </VRulerCol>
      <Canvas>
        <CanvasInner>
          <Page>
            <Headline>Buy 1 Get 1 Free</Headline>
            <Subline>
              <SubText>
                <SlantedText>notebooks and planners</SlantedText>
                <Caret />
              </SubText>
            </Subline>
          </Page>
        </CanvasInner>
      </Canvas>
    </Work>

    <StatusBar>
      <StatusText $w={122}>Page 1 of 1</StatusText>
      <StatusText $w={89} $ml={41}>8 words</StatusText>
      <Tool w={34} ml={40}><ProofIcon /></Tool>
      <StatusText $w={260} $ml={36}>English (United States)</StatusText>
      <StatusRight>
        <Tool w={30}><FocusIcon /></Tool>
        <StatusText $w={68} $ml={14}>Focus</StatusText>
        <ViewActive>
          <PrintView />
        </ViewActive>
        <Tool w={32} ml={19}><WebView /></Tool>
        <Tool w={30} ml={41}><OutlineView /></Tool>
        <Tool w={28} ml={42}><DraftView /></Tool>
        <Tool w={17} ml={37}>
          <Ico w={17} h={6}><rect width="17" height="5" fill="#666" /></Ico>
        </Tool>
        <ZoomTrack>
          <ZoomThumb $pos={90} />
        </ZoomTrack>
        <Tool w={18} ml={13}>
          <Ico w={18} h={18}><path d="M9 0v18M0 9h18" stroke="#666" strokeWidth="4" /></Ico>
        </Tool>
        <StatusText $w={52} $ml={33}>90%</StatusText>
        <Slot $w={50} />
      </StatusRight>
    </StatusBar>
  </Window>
);

export default App;
